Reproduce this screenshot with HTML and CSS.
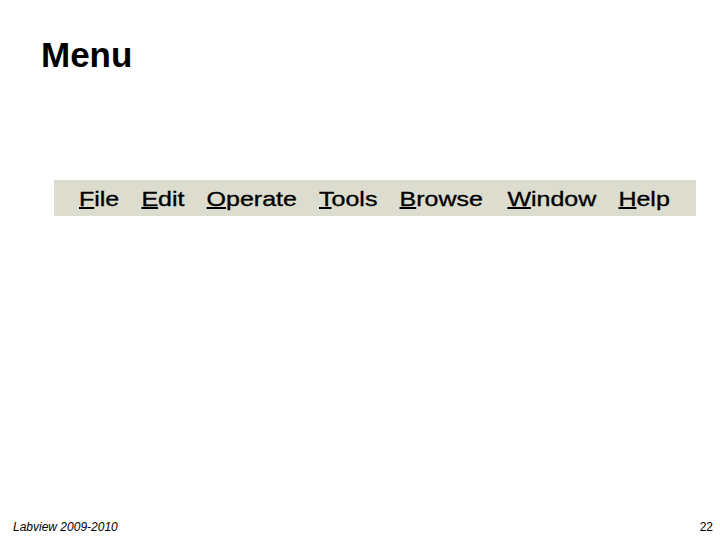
FILE: index.html
```html
<!DOCTYPE html>
<html lang="en">
<head>
<meta charset="utf-8">
<title>Menu</title>
<link rel="stylesheet" href="styles.css">
</head>
<body>
<div class="slide">
  <h1 class="title">Menu</h1>
  <div class="menubar">
    <div class="menu-items">
      <span class="item"><u>F</u>ile</span>
      <span class="item"><u>E</u>dit</span>
      <span class="item"><u>O</u>perate</span>
      <span class="item"><u>T</u>ools</span>
      <span class="item"><u>B</u>rowse</span>
      <span class="item item-wide"><u>W</u>indow</span>
      <span class="item"><u>H</u>elp</span>
    </div>
  </div>
  <div class="footer">
    <span class="course">Labview 2009-2010</span>
    <span class="page-no">22</span>
  </div>
</div>
</body>
</html>
```

FILE: styles.css
```css
html, body {
  margin: 0;
  padding: 0;
  background: #ffffff;
}

body {
  font-family: "Liberation Sans", Arial, sans-serif;
  color: #000000;
}

.slide {
  width: 720px;
  height: 540px;
  display: flex;
  flex-direction: column;
  box-sizing: border-box;
  padding-bottom: 6px;
}

.title {
  margin: 35px 0 0 41px;
  font-size: 35px;
  font-weight: bold;
  line-height: 40px;
}

.menubar {
  margin: 105px 0 0 54px;
  width: 642px;
  height: 36px;
  box-sizing: border-box;
  padding: 2px 0 0 25px;
  background: #dcdccf;
  overflow: hidden;
}

.menu-items {
  display: flex;
  gap: 18.6px;
  font-size: 21px;
  line-height: 34px;
  white-space: nowrap;
  -webkit-text-stroke: 0.35px #000000;
  transform: scaleX(1.19);
  transform-origin: left top;
}

.item-wide {
  margin-left: 2px;
}

.item u {
  text-decoration: underline;
  text-decoration-thickness: 2px;
  text-underline-offset: 1px;
}

.footer {
  margin-top: auto;
  display: flex;
  justify-content: space-between;
  padding: 0 7px 0 13px;
  font-size: 12px;
  line-height: 14px;
}

.course {
  font-style: italic;
}
```
